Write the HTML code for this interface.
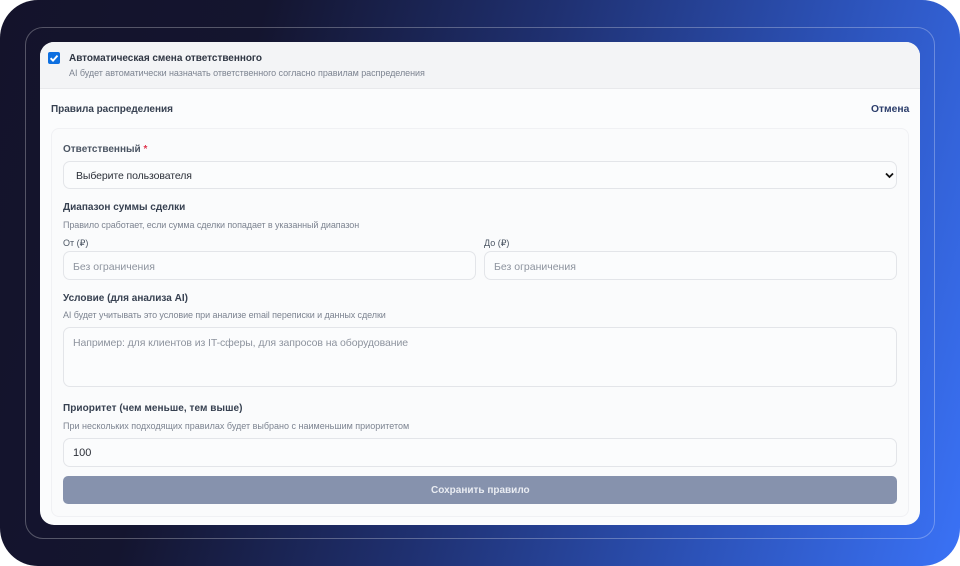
<!DOCTYPE html>
<html lang="ru"><head><meta charset="utf-8"><title>Правила распределения</title>
<style>
html,body{margin:0;padding:0;width:960px;height:566px;overflow:hidden;background:#fff}
*{box-sizing:border-box}
#bg{position:absolute;left:0;top:0;width:960px;height:566px;border-radius:38px;overflow:hidden;background:linear-gradient(105deg,#14132b 0%,#14152f 24%,#1f3070 50%,#2c52b8 76%,#3a72f6 100%)}
#line{position:absolute;left:25px;top:27px;width:910px;height:512px;border-radius:18px;border:1px solid rgba(255,255,255,.28)}
#card{position:absolute;left:40px;top:42px;width:880px;height:483px;border-radius:14px;background:#fbfcfd;overflow:hidden}
#head{position:absolute;left:40px;top:42px;width:880px;height:47px;background:#f3f4f6;border-bottom:1px solid #e8e9ec;border-radius:14px 14px 0 0}
#panel{position:absolute;left:51px;top:128px;width:858px;height:389px;border:1px solid #f0f1f4;border-radius:8px;background:#fafbfc}
.f{position:absolute;background:#fbfcfd;border:1px solid #e3e5e9;border-radius:7px}
.t{position:absolute;white-space:nowrap;font-family:"Liberation Sans",sans-serif;line-height:14px;height:14px;filter:blur(.25px)}
.b{font-weight:bold;color:#374151;font-size:10px}
.s{font-size:9px;color:#7d8491}
.p{font-size:10.5px;color:#8d939e}
#btn{position:absolute;left:63px;top:476px;width:834px;height:28px;border-radius:5px;background:#8692ad}
#cb{position:absolute;left:48px;top:52px;width:12px;height:12px;border-radius:2px;background:#0d6fe0}
</style></head><body>
<div id="bg"></div><div id="line"></div><div id="card"></div><div id="head"></div>
<div id="cb"><svg width="12" height="12" viewBox="0 0 12 12" style="display:block"><path d="M2.6 6.2 5 8.6 9.5 3.6" fill="none" stroke="#fff" stroke-width="1.9"/></svg></div>
<div class="t b" style="left:69px;top:52px;color:#2f3643;letter-spacing:-.03px">Автоматическая смена ответственного</div>
<div class="t s" style="left:69px;top:66px;letter-spacing:-.05px">AI будет автоматически назначать ответственного согласно правилам распределения</div>
<div class="t b" style="left:51px;top:103px;letter-spacing:-.03px">Правила распределения</div>
<div class="t b" style="left:871px;top:103px;font-size:10.3px;color:#2b3d6b">Отмена</div>
<div id="panel"></div>
<div class="t b" style="left:63px;top:143px;color:#4b5563">Ответственный <span style="color:#e0364f">*</span></div>
<div class="f" style="left:63px;top:161px;width:834px;height:28px"></div>
<div class="t" style="left:76px;top:169px;font-size:10.5px;color:#2b2f38;letter-spacing:-.1px">Выберите пользователя</div>
<svg style="position:absolute;left:885px;top:172px" width="9" height="7" viewBox="0 0 9 7"><path d="M1 1.5 4.5 5 8 1.5" fill="none" stroke="#111" stroke-width="1.8"/></svg>
<div class="t b" style="left:63px;top:201px">Диапазон суммы сделки</div>
<div class="t s" style="left:63px;top:218px;letter-spacing:-.09px">Правило сработает, если сумма сделки попадает в указанный диапазон</div>
<div class="t" style="left:63px;top:236px;font-size:9px;color:#4b5563">От (₽)</div>
<div class="t" style="left:484px;top:236px;font-size:9px;color:#4b5563">До (₽)</div>
<div class="f" style="left:63px;top:251px;width:413px;height:29px"></div>
<div class="f" style="left:484px;top:251px;width:413px;height:29px"></div>
<div class="t p" style="left:73px;top:260px">Без ограничения</div>
<div class="t p" style="left:494px;top:260px">Без ограничения</div>
<div class="t b" style="left:63px;top:292px">Условие (для анализа AI)</div>
<div class="t s" style="left:63px;top:308px;letter-spacing:-.08px">AI будет учитывать это условие при анализе email переписки и данных сделки</div>
<div class="f" style="left:63px;top:327px;width:834px;height:60px"></div>
<div class="t p" style="left:73px;top:336px;letter-spacing:-.09px">Например: для клиентов из IT-сферы, для запросов на оборудование</div>
<div class="t b" style="left:63px;top:402px;letter-spacing:.06px">Приоритет (чем меньше, тем выше)</div>
<div class="t s" style="left:63px;top:419px">При нескольких подходящих правилах будет выбрано с наименьшим приоритетом</div>
<div class="f" style="left:63px;top:438px;width:834px;height:29px"></div>
<div class="t" style="left:73px;top:446px;font-size:11px;color:#2b2f38">100</div>
<div id="btn"></div>
<div class="t b" style="left:431px;top:484px;color:#e9ecf2">Сохранить правило</div>
</body></html>
